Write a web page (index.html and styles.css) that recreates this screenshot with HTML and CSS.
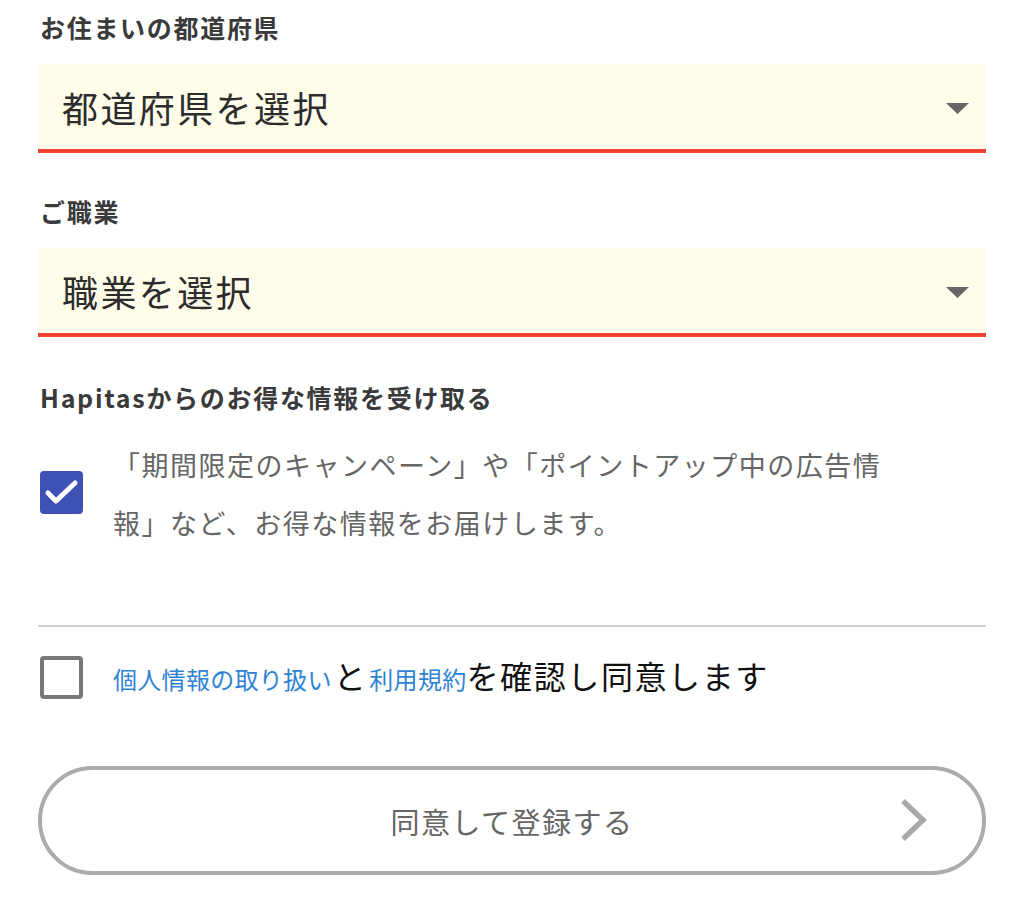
FILE: index.html
```html
<!DOCTYPE html>
<html lang="ja">
<head>
<meta charset="utf-8">
<link rel="stylesheet" href="styles.css">
</head>
<body>
<div class="form">
  <div class="label first">お住まいの都道府県</div>
  <div class="select">
    <span class="select-text">都道府県を選択</span>
    <svg class="caret" width="23" height="11" viewBox="0 0 23 11"><polygon points="0,0 23,0 11.5,11" fill="#666"/></svg>
  </div>

  <div class="label second">ご職業</div>
  <div class="select">
    <span class="select-text">職業を選択</span>
    <svg class="caret" width="23" height="11" viewBox="0 0 23 11"><polygon points="0,0 23,0 11.5,11" fill="#666"/></svg>
  </div>

  <div class="label">Hapitasからのお得な情報を受け取る</div>
  <div class="check-row">
    <span class="box checked">
      <svg width="43" height="43" viewBox="0 0 43 43"><polyline points="8,22 16,30 35,12" fill="none" stroke="#fff" stroke-width="5" stroke-linecap="round" stroke-linejoin="round"/></svg>
    </span>
    <p class="desc">「期間限定のキャンペーン」や「ポイントアップ中の広告情<br>報」など、お得な情報をお届けします。</p>
  </div>

  <hr class="divider">

  <div class="agree-row">
    <span class="box"></span>
    <p class="agree"><a class="link">個人情報の取り扱い</a><span class="to">と</span><a class="link">利用規約</a>を確認し同意します</p>
  </div>

  <button class="submit">
    <span class="submit-text">同意して登録する</span>
    <svg class="chev" width="28" height="44" viewBox="0 0 28 44"><polyline points="4,3 24,22 4,41" fill="none" stroke="#aaa" stroke-width="5.5"/></svg>
  </button>
</div>
</body>
</html>
```

FILE: styles.css
```css
* { box-sizing: border-box; }
body {
  margin: 0;
  background: #fff;
  font-family: "Noto Sans CJK JP", "Noto Sans", sans-serif;
  color: #333;
}
.form {
  padding: 0 38px;
  width: 1024px;
}
.label {
  font-size: 25px;
  font-weight: bold;
  letter-spacing: 1.7px;
  line-height: 36px;
  color: #3a3a3a;
  margin-top: 42px;
  margin-bottom: 19px;
  padding-left: 2px;
}
.label.first { margin-top: 9px; }
.label.second { margin-top: 40px; }
.select {
  height: 89px;
  background: #fffce9;
  border-bottom: 4px solid #f2412f;
  display: flex;
  align-items: center;
  justify-content: space-between;
  padding: 0 17px 0 24px;
}
.select-text {
  font-size: 36px;
  letter-spacing: 2.4px;
  color: #2c2c2c;
  line-height: 1;
}
.caret { margin-top: 4px; }
.check-row {
  display: flex;
  align-items: center;
  margin-top: 21px;
  padding-left: 2px;
}
.box {
  flex: none;
  width: 43px;
  height: 43px;
  border: 4px solid #777;
  border-radius: 4px;
  display: block;
  margin-top: -4px;
}
.box.checked {
  background: #3f51b5;
  border: none;
}
.box svg { display: block; }
.desc {
  margin: 0 0 0 30px;
  font-size: 27px;
  letter-spacing: 1.5px;
  line-height: 58px;
  color: #666;
}
.divider {
  border: none;
  border-top: 2px solid #cfcfcf;
  margin: 73px 0 0 0;
}
.agree-row {
  display: flex;
  align-items: center;
  margin-top: 27px;
  padding-left: 2px;
}
.agree-row .box { margin-top: 0; }
.agree {
  margin: 0 0 0 30px;
  font-size: 32px;
  letter-spacing: 1.6px;
  color: #111;
  line-height: 42px;
}
.link {
  font-size: 24px;
  letter-spacing: 0.3px;
  color: #2f83d6;
}
.to { margin: 0 2px 0 2px; }
.submit {
  margin-top: 66px;
  width: 100%;
  height: 109px;
  border: 4px solid #ababab;
  border-radius: 55px;
  background: #fff;
  display: flex;
  align-items: center;
  justify-content: center;
  position: relative;
  font-family: inherit;
  padding: 0;
}
.submit-text {
  font-size: 29px;
  color: #666;
  letter-spacing: 1.5px;
}
.chev {
  position: absolute;
  right: 55px;
  top: 28px;
}
```
